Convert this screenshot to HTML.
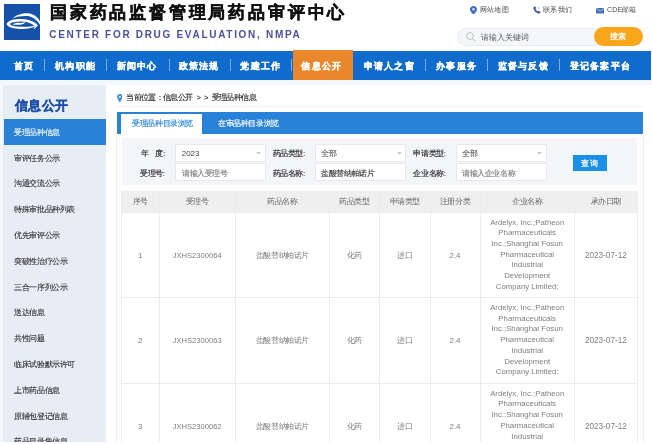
<!DOCTYPE html>
<html><head><meta charset="utf-8">
<style>
*{margin:0;padding:0;box-sizing:border-box}
html,body{width:652px;height:444px;overflow:hidden;background:#fff;font-family:"Liberation Sans",sans-serif;color:#333}
.a{position:absolute;white-space:nowrap}
.t{font-size:8px;letter-spacing:-0.4px;line-height:10px}
.nav{position:absolute;left:0;top:51px;width:651px;height:28.5px;background:#0f6bcc}
.ni{position:absolute;top:0.5px;height:28.5px;line-height:28.5px;color:#fff;font-weight:bold;font-size:9px;letter-spacing:1.25px;-webkit-text-stroke:0.25px #fff}
.sep{position:absolute;top:7.5px;width:1px;height:12.5px;background:rgba(255,255,255,.45)}
.side{position:absolute;left:3.4px;top:84.8px;width:102.4px;height:357.2px;background:#e7edf5}
.si{position:absolute;left:14.4px;font-size:8px;letter-spacing:-0.45px;color:#2c2c2c;line-height:10px;margin-top:0.8px;-webkit-text-stroke:0.1px currentColor}
.lbl{position:absolute;font-size:8px;letter-spacing:-0.4px;color:#222;line-height:10px;-webkit-text-stroke:0.12px currentColor}
.box{position:absolute;height:16.6px;background:#fff;border:1px solid #e6e8eb;border-radius:1px}
.vl{position:absolute;width:1px;background:#ececec}
.hl{position:absolute;height:1px;background:#ececec}
.th{position:absolute;top:191.2px;height:21.3px;line-height:21.3px;text-align:center;font-size:8px;letter-spacing:-0.4px;color:#666}
.td{position:absolute;text-align:center;font-size:8px;color:#7e7e7e;display:flex;align-items:center;justify-content:center}
</style></head><body style="filter:blur(0.3px)">

<!-- header -->
<svg class="a" style="left:4px;top:4px" width="36" height="36" viewBox="0 0 36 36">
<rect width="36" height="36" fill="#1550aa"/>
<path d="M8.8 14.4 C13 10.3 19 9 24 9.3 C30 9.8 34 13.3 36 17.6 L36 21 C33.2 16 28.5 12.6 23.5 12.1 C18.5 11.7 13.2 12.5 8.8 14.4 Z" fill="#fff"/>
<path fill-rule="evenodd" d="M2.6 20 C3.8 16.3 11 15 17.5 15.1 C24 15.2 30.2 17.4 33.8 21.3 C28 24.3 22 25.2 16 25 C9 24.8 3.3 23 2.6 20 Z M5.9 20.1 C6.8 18.3 12 17.3 17.5 17.4 C23 17.5 27.3 19 30.3 21.4 C26 22.8 21 23 16 22.8 C10.5 22.6 6.4 21.8 5.9 20.1 Z" fill="#fff"/>
<path d="M33.4 21.4 L30 24.6" stroke="#fff" stroke-width="1.1"/>
<path d="M8.6 20.8 C10 18.9 14 18.7 16 18.9 C18 19.1 19.6 18.4 21.4 18 C20.4 19.9 18 20.9 15.5 20.8 C13 20.7 10.8 20.6 8.6 20.8 Z" fill="#fff"/>
</svg>
<div class="a" style="left:49.9px;top:1.4px;font-size:17px;font-weight:bold;color:#111;line-height:24px;letter-spacing:2.82px;-webkit-text-stroke:0.45px #111">国家药品监督管理局药品审评中心</div>
<div class="a" style="left:49.3px;top:28.6px;font-size:10px;font-weight:bold;color:#4a509e;letter-spacing:1.7px;line-height:12px">CENTER FOR DRUG EVALUATION, NMPA</div>

<!-- top links -->
<svg class="a" style="left:469.5px;top:5.8px" width="7" height="8.5" viewBox="0 0 7 8.5"><path d="M3.5 0 C1.5 0 0 1.5 0 3.4 C0 5.5 3.5 8.5 3.5 8.5 C3.5 8.5 7 5.5 7 3.4 C7 1.5 5.5 0 3.5 0Z" fill="#3d6fb8"/><circle cx="3.5" cy="3.3" r="1.3" fill="#cfe3ff"/></svg>
<div class="a t" style="left:480px;top:5px;color:#4a4a4a;font-size:7px;letter-spacing:0.2px">网站地图</div>
<svg class="a" style="left:532.5px;top:6.4px" width="8" height="8" viewBox="0 0 8 8"><path d="M0.5 1.2 L1.9 0.2 L3.2 2 L2.4 2.9 C2.9 4 3.8 4.9 4.9 5.5 L5.8 4.7 L7.6 6 L6.6 7.5 C3.5 7.6 0.3 4.6 0.5 1.2Z" fill="#3b56a6"/><path d="M4.6 1.2 C5.6 1.4 6.3 2.1 6.5 3" stroke="#8a9acb" stroke-width="0.6" fill="none"/></svg>
<div class="a t" style="left:543.3px;top:5px;color:#4a4a4a;font-size:7px;letter-spacing:0.2px">联系我们</div>
<svg class="a" style="left:596px;top:8px" width="8.4" height="5.5" viewBox="0 0 8.4 5.5"><rect width="8.4" height="5.5" fill="#3f70b8"/><path d="M0 0.3 L4.2 3 L8.4 0.3" stroke="#cfe0f5" stroke-width="0.7" fill="none"/></svg>
<div class="a t" style="left:606.9px;top:5px;color:#4a4a4a;font-size:7px;letter-spacing:0.2px">CDE邮箱</div>

<!-- search -->
<div class="a" style="left:457.4px;top:27.6px;width:185px;height:18.8px;border-radius:9.4px;background:#f4f6f9;border:1px solid #e8ecf1"></div>
<svg class="a" style="left:465.5px;top:31.9px" width="11" height="10" viewBox="0 0 11 10"><circle cx="4" cy="4" r="3.4" stroke="#b5b8bd" stroke-width="0.9" fill="none"/><path d="M6.5 6.6 L9.5 9.3" stroke="#b5b8bd" stroke-width="0.9"/></svg>
<div class="a t" style="left:481px;top:33.2px;color:#5a5a5a;letter-spacing:0.05px">请输入关键词</div>
<div class="a" style="left:593.8px;top:27.2px;width:49px;height:19px;border-radius:9.5px;background:#faa61a"></div>
<div class="a t" style="left:609.7px;top:32.3px;color:#fff;letter-spacing:0.3px;-webkit-text-stroke:0.25px #fff">搜索</div>

<!-- nav -->
<div class="nav">
<div class="ni" style="left:14.2px">首页</div>
<div class="sep" style="left:44px"></div>
<div class="ni" style="left:55px">机构职能</div>
<div class="sep" style="left:106px"></div>
<div class="ni" style="left:116.7px">新闻中心</div>
<div class="sep" style="left:168.5px"></div>
<div class="ni" style="left:178.5px">政策法规</div>
<div class="sep" style="left:229.5px"></div>
<div class="ni" style="left:240.4px">党建工作</div>
<div class="sep" style="left:291.2px"></div>
<div style="position:absolute;left:292.6px;top:-1px;width:60.5px;height:29.5px;background:#ea872a"></div>
<div class="ni" style="left:301.4px">信息公开</div>
<div class="ni" style="left:363.7px">申请人之窗</div>
<div class="sep" style="left:425px"></div>
<div class="ni" style="left:436px">办事服务</div>
<div class="sep" style="left:486.8px"></div>
<div class="ni" style="left:497.6px">监督与反馈</div>
<div class="sep" style="left:559.4px"></div>
<div class="ni" style="left:569.5px">登记备案平台</div>
</div>

<!-- page bg -->
<div class="a" style="left:0;top:79.5px;width:652px;height:362.5px;background:#f4f7fb"></div>

<!-- sidebar -->
<div class="side"></div>
<div class="a" style="left:15px;top:96.5px;font-size:13px;font-weight:bold;color:#1f50a8;letter-spacing:0.45px;line-height:18px;-webkit-text-stroke:0.35px #1f50a8">信息公开</div>
<div class="a" style="left:3.5px;top:119px;width:102.4px;height:25.8px;background:#2a81d8"></div>
<div class="si" style="top:127px;color:#fff">受理品种信息</div>
<div class="si" style="top:152.8px">审评任务公示</div>
<div class="si" style="top:178.6px">沟通交流公示</div>
<div class="si" style="top:204.4px">特殊审批品种列表</div>
<div class="si" style="top:230.2px">优先审评公示</div>
<div class="si" style="top:256px">突破性治疗公示</div>
<div class="si" style="top:281.8px">三合一序列公示</div>
<div class="si" style="top:307.6px">送达信息</div>
<div class="si" style="top:333.4px">共性问题</div>
<div class="si" style="top:359.2px">临床试验默示许可</div>
<div class="si" style="top:385px">上市药品信息</div>
<div class="si" style="top:410.8px">原辅包登记信息</div>
<div class="si" style="top:436.6px">药品目录集信息</div>

<!-- main panel -->
<div class="a" style="left:106px;top:84.8px;width:546px;height:359.2px;background:#fff"></div>
<div class="vl" style="left:115.5px;top:133.6px;height:308.4px;background:#efefef"></div>
<div class="vl" style="left:642.5px;top:133.6px;height:308.4px;background:#eeeeee"></div>
<div class="hl" style="left:116.5px;top:105.8px;width:526px;background:#f2f2f2"></div>

<!-- breadcrumb -->
<svg class="a" style="left:116.5px;top:94px" width="5.6" height="8.6" viewBox="0 0 5.6 8.6"><path d="M2.8 0 C1.2 0 0 1.2 0 2.8 C0 4.6 2.8 8.6 2.8 8.6 C2.8 8.6 5.6 4.6 5.6 2.8 C5.6 1.2 4.4 0 2.8 0Z" fill="#3a90da"/><circle cx="2.8" cy="2.8" r="1.1" fill="#e6f3ff"/></svg>
<div class="a t" style="left:126.2px;top:92.8px;color:#222;-webkit-text-stroke:0.12px #222;letter-spacing:-0.65px">当前位置：信息公开<span style="display:inline-block;font-size:7px;letter-spacing:0;margin:0 0 0 4.3px">&gt;</span><span style="display:inline-block;font-size:7px;letter-spacing:0;margin:0 3.2px 0 3.6px">&gt;</span><span style="letter-spacing:-0.6px">受理品种信息</span></div>

<!-- tabs -->
<div class="a" style="left:116.5px;top:112px;width:526px;height:21.6px;background:#2882d8"></div>
<div class="a" style="left:120.8px;top:113.6px;width:81.4px;height:20px;background:#fff"></div>
<div class="a t" style="left:132.2px;top:118.5px;color:#2882d8;-webkit-text-stroke:0.15px #2882d8">受理品种目录浏览</div>
<div class="a t" style="left:218px;top:118.5px;color:#fff;-webkit-text-stroke:0.15px #fff">在审品种目录浏览</div>

<!-- filter -->
<div class="a" style="left:121.5px;top:138.4px;width:515px;height:46.6px;background:#f3f5f8"></div>
<div class="lbl" style="left:140.7px;top:149.2px">年<span style="display:inline-block;width:7px"></span>度:</div>
<div class="lbl" style="left:140px;top:168.9px">受理号:</div>
<div class="lbl" style="left:272.5px;top:149.2px">药品类型:</div>
<div class="lbl" style="left:272.5px;top:168.9px">药品名称:</div>
<div class="lbl" style="left:413.4px;top:149.2px">申请类型:</div>
<div class="lbl" style="left:413.4px;top:168.9px">企业名称:</div>

<div class="box" style="left:175.3px;top:144px;height:17.5px;width:91px"></div>
<div class="box" style="left:175.3px;top:163.2px;height:17.8px;width:91px"></div>
<div class="box" style="left:315.3px;top:144px;height:17.5px;width:91px"></div>
<div class="box" style="left:315.3px;top:163.2px;height:17.8px;width:91px"></div>
<div class="box" style="left:456.3px;top:144px;height:17.5px;width:91px"></div>
<div class="box" style="left:456.3px;top:163.2px;height:17.8px;width:91px"></div>
<div class="lbl" style="left:181.7px;top:149.4px;letter-spacing:0;color:#444;-webkit-text-stroke:0">2023</div>
<div class="lbl" style="left:182px;top:168.9px;color:#7a7a7a">请输入受理号</div>
<div class="lbl" style="left:321.3px;top:149.2px;color:#666">全部</div>
<div class="lbl" style="left:321.3px;top:168.9px;color:#333">盐酸替纳帕诺片</div>
<div class="lbl" style="left:462px;top:149.2px;color:#666">全部</div>
<div class="lbl" style="left:462px;top:168.9px;color:#7a7a7a">请输入企业名称</div>
<svg class="a" style="left:256px;top:151.5px" width="5" height="3" viewBox="0 0 5 3"><path d="M0 0 L2.5 2.5 L5 0Z" fill="#c8c8c8"/></svg>
<svg class="a" style="left:396.5px;top:151.5px" width="5" height="3" viewBox="0 0 5 3"><path d="M0 0 L2.5 2.5 L5 0Z" fill="#c8c8c8"/></svg>
<svg class="a" style="left:537px;top:151.5px" width="5" height="3" viewBox="0 0 5 3"><path d="M0 0 L2.5 2.5 L5 0Z" fill="#c8c8c8"/></svg>
<div class="a" style="left:572.8px;top:155.3px;width:34px;height:16.2px;background:#1a8fe6"></div>
<div class="lbl" style="left:580.6px;top:159.3px;color:#fff;letter-spacing:1.2px;-webkit-text-stroke:0.25px #fff">查询</div>

<!-- table -->
<div class="a" style="left:121.5px;top:191.2px;width:515.8px;height:21.3px;background:#efefef"></div>
<div class="vl" style="left:121.0px;top:191.2px;height:251px"></div>
<div class="vl" style="left:158.5px;top:191.2px;height:251px"></div>
<div class="vl" style="left:234.9px;top:191.2px;height:251px"></div>
<div class="vl" style="left:329.0px;top:191.2px;height:251px"></div>
<div class="vl" style="left:379.0px;top:191.2px;height:251px"></div>
<div class="vl" style="left:429.5px;top:191.2px;height:251px"></div>
<div class="vl" style="left:479.5px;top:191.2px;height:251px"></div>
<div class="vl" style="left:573.9px;top:191.2px;height:251px"></div>
<div class="vl" style="left:636.8px;top:191.2px;height:251px"></div>
<div class="hl" style="left:121.5px;top:212.0px;width:515.8px"></div>
<div class="hl" style="left:121.5px;top:297.0px;width:515.8px"></div>
<div class="hl" style="left:121.5px;top:383.0px;width:515.8px"></div>
<div class="th" style="left:121.5px;width:37.5px">序号</div>
<div class="th" style="left:159px;width:76.4px">受理号</div>
<div class="th" style="left:235.4px;width:94.1px">药品名称</div>
<div class="th" style="left:329.5px;width:50.0px">药品类型</div>
<div class="th" style="left:379.5px;width:50.5px">申请类型</div>
<div class="th" style="left:430px;width:50.0px">注册分类</div>
<div class="th" style="left:480px;width:94.4px">企业名称</div>
<div class="th" style="left:574.4px;width:62.9px">承办日期</div>
<div class="td" style="left:121.5px;top:212.5px;width:37.5px;height:85.0px;"><span>1</span></div>
<div class="td" style="left:159px;top:212.5px;width:76.4px;height:85.0px;font-size:7.6px;"><span>JXHS2300064</span></div>
<div class="td" style="left:235.4px;top:212.5px;width:94.1px;height:85.0px;letter-spacing:-0.4px;"><span>盐酸替纳帕诺片</span></div>
<div class="td" style="left:329.5px;top:212.5px;width:50.0px;height:85.0px;letter-spacing:-0.4px;"><span>化药</span></div>
<div class="td" style="left:379.5px;top:212.5px;width:50.5px;height:85.0px;letter-spacing:-0.4px;"><span>进口</span></div>
<div class="td" style="left:430px;top:212.5px;width:50.0px;height:85.0px;"><span>2.4</span></div>
<div class="td" style="left:480px;top:212.5px;width:94.4px;height:85.0px;line-height:10.7px;font-size:7.8px;"><span>Ardelyx, Inc.;Patheon<br>Pharmaceuticals<br>Inc.;Shanghai Fosun<br>Pharmaceutical<br>Industrial<br>Development<br>Company Limited;</span></div>
<div class="td" style="left:574.4px;top:212.5px;width:62.9px;height:85.0px;font-size:8.2px;"><span>2023-07-12</span></div>
<div class="td" style="left:121.5px;top:297.5px;width:37.5px;height:86.0px;"><span>2</span></div>
<div class="td" style="left:159px;top:297.5px;width:76.4px;height:86.0px;font-size:7.6px;"><span>JXHS2300063</span></div>
<div class="td" style="left:235.4px;top:297.5px;width:94.1px;height:86.0px;letter-spacing:-0.4px;"><span>盐酸替纳帕诺片</span></div>
<div class="td" style="left:329.5px;top:297.5px;width:50.0px;height:86.0px;letter-spacing:-0.4px;"><span>化药</span></div>
<div class="td" style="left:379.5px;top:297.5px;width:50.5px;height:86.0px;letter-spacing:-0.4px;"><span>进口</span></div>
<div class="td" style="left:430px;top:297.5px;width:50.0px;height:86.0px;"><span>2.4</span></div>
<div class="td" style="left:480px;top:297.5px;width:94.4px;height:86.0px;line-height:10.7px;font-size:7.8px;"><span>Ardelyx, Inc.;Patheon<br>Pharmaceuticals<br>Inc.;Shanghai Fosun<br>Pharmaceutical<br>Industrial<br>Development<br>Company Limited;</span></div>
<div class="td" style="left:574.4px;top:297.5px;width:62.9px;height:86.0px;font-size:8.2px;"><span>2023-07-12</span></div>
<div class="td" style="left:121.5px;top:383.5px;width:37.5px;height:85.5px;"><span>3</span></div>
<div class="td" style="left:159px;top:383.5px;width:76.4px;height:85.5px;font-size:7.6px;"><span>JXHS2300062</span></div>
<div class="td" style="left:235.4px;top:383.5px;width:94.1px;height:85.5px;letter-spacing:-0.4px;"><span>盐酸替纳帕诺片</span></div>
<div class="td" style="left:329.5px;top:383.5px;width:50.0px;height:85.5px;letter-spacing:-0.4px;"><span>化药</span></div>
<div class="td" style="left:379.5px;top:383.5px;width:50.5px;height:85.5px;letter-spacing:-0.4px;"><span>进口</span></div>
<div class="td" style="left:430px;top:383.5px;width:50.0px;height:85.5px;"><span>2.4</span></div>
<div class="td" style="left:480px;top:383.5px;width:94.4px;height:85.5px;line-height:10.7px;font-size:7.8px;"><span>Ardelyx, Inc.;Patheon<br>Pharmaceuticals<br>Inc.;Shanghai Fosun<br>Pharmaceutical<br>Industrial<br>Development<br>Company Limited;</span></div>
<div class="td" style="left:574.4px;top:383.5px;width:62.9px;height:85.5px;font-size:8.2px;"><span>2023-07-12</span></div>

<div class="a" style="left:0;top:442px;width:652px;height:2px;background:#fff"></div>
</body></html>
